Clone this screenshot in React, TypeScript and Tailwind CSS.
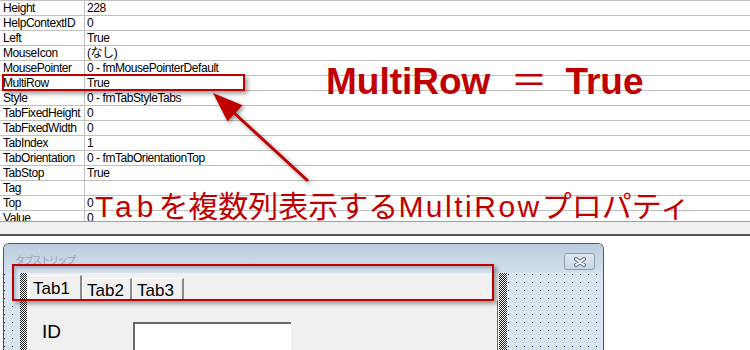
import React from "react";

const rows: [string, string][] = [
  ["Height", "228"],
  ["HelpContextID", "0"],
  ["Left", "True"],
  ["MouseIcon", "(なし)"],
  ["MousePointer", "0 - fmMousePointerDefault"],
  ["MultiRow", "True"],
  ["Style", "0 - fmTabStyleTabs"],
  ["TabFixedHeight", "0"],
  ["TabFixedWidth", "0"],
  ["TabIndex", "1"],
  ["TabOrientation", "0 - fmTabOrientationTop"],
  ["TabStop", "True"],
  ["Tag", ""],
  ["Top", "0"],
  ["Value", "0"],
];

const dots =
  "bg-[#d8e6f3] bg-[conic-gradient(at_1px_1px,transparent_75%,#000_0)] bg-[length:8px_8px] bg-[position:0_1px]";
const stipple =
  "bg-[repeating-conic-gradient(#222_0_25%,#fff_0_50%)] bg-[length:2px_2px]";

export default function App() {
  return (
    <div className="relative w-[750px] h-[350px] overflow-hidden bg-white font-['Liberation_Sans','Noto_Sans_CJK_JP',sans-serif] text-black">
      {/* property grid */}
      <div className="h-[221px] overflow-hidden">
        {rows.map(([k, v]) => (
          <div key={k} className="flex h-[15px] border-t border-[#c0c0c0] text-[12px] tracking-[-0.45px] leading-[14px]">
            <div className="w-[85px] shrink-0 border-r border-[#c0c0c0] pl-[3px] whitespace-nowrap">{k}</div>
            <div className="pl-[2px] whitespace-nowrap">{v}</div>
          </div>
        ))}
      </div>
      <div className="h-[1px] bg-[#a0a0a0]" />
      <div className="h-[12px] bg-[#f0f0f0]" />
      <div className="h-[2px] bg-[#555]" />
      <div className="h-[7px]" />

      {/* dialog */}
      <div className="ml-[3px] w-[601px] h-[107px] rounded-t-[6px] border border-b-0 border-[#555] overflow-hidden flex flex-col">
        <div className="h-[29px] shrink-0 flex items-start justify-between bg-gradient-to-b from-[#bccddf] to-[#d3e0ec]">
          <div className="pl-[11px] pt-[11px] text-[10px] leading-[12px] tracking-[-1.5px] text-[#9aa3ad]">タブストリップ</div>
          <div className="mt-[9px] mr-[8px] w-[31px] h-[17px] rounded-[3px] border border-[#8a9bb0] bg-gradient-to-b from-[#dfe8f1] to-[#c8d5e3] flex items-center justify-center">
            <svg width="14" height="10" viewBox="0 0 14 10">
              <path d="M3 2 L11 8 M11 2 L3 8" stroke="#5f6f80" strokeWidth="4" strokeLinecap="round" />
              <path d="M3 2 L11 8 M11 2 L3 8" stroke="#ffffff" strokeWidth="2" strokeLinecap="round" />
            </svg>
          </div>
        </div>
        <div className={`flex-1 flex ${dots}`}>
          <div className="w-[16px] shrink-0" />
          <div className="w-[487px] shrink-0 flex">
            <div className={`w-[7px] ${stipple}`} />
            <div className="w-[472px] flex flex-col bg-[#f0f0f0]">
              <div className="h-[27px] flex items-end pl-[1px] text-[17px] leading-none">
                <div className="w-[54px] h-[25px] border-l border-t border-white border-r-2 border-r-[#8a8a8a] pl-[4px] pt-[4px]">Tab1</div>
                <div className="w-[50px] h-[22px] border-l border-t border-white border-r-2 border-r-[#8a8a8a] pl-[4px] pt-[3px]">Tab2</div>
                <div className="w-[52px] h-[22px] border-l border-t border-white border-r-2 border-r-[#8a8a8a] pl-[4px] pt-[3px]">Tab3</div>
              </div>
              <div className="flex-1 flex items-start border-t border-white border-r border-r-[#696969] mr-[1px]">
                <div className="ml-[15px] mt-[21px] text-[19px] leading-none">ID</div>
                <div className="ml-[72px] mt-[21px] w-[158px] h-[40px] bg-white border-t-2 border-l-2 border-t-[#696969] border-l-[#696969]" />
              </div>
            </div>
            <div className={`w-[8px] ${stipple}`} />
          </div>
          <div className="flex-1" />
        </div>
      </div>

      {/* annotations */}
      <div className="absolute left-[2px] top-[74px] w-[243px] h-[17px] border-2 border-[#c00000] shadow-[3px_3px_4px_rgba(0,0,0,0.35)]" />
      <div className="absolute left-[12px] top-[264px] w-[482px] h-[37px] border-2 border-[#c00000] shadow-[3px_3px_4px_rgba(0,0,0,0.35),inset_2px_2px_3px_rgba(0,0,0,0.2)]" />

      <div className="absolute left-[326px] top-[63px] flex items-baseline text-[37px] font-bold leading-none text-[#c00000] whitespace-nowrap">
        <span>MultiRow</span>
        <span className="ml-[20px] font-normal">＝</span>
        <span className="ml-[18px]">True</span>
      </div>

      <div className="absolute left-[95px] top-[192px] text-[30px] leading-none text-[#c00000] whitespace-nowrap">
        <span className="tracking-[5px]">Tab</span>を複数列表示する<span className="tracking-[2.5px]">MultiRow</span>プロパティ
      </div>

      <svg className="absolute left-0 top-0 pointer-events-none drop-shadow-[2px_2px_2px_rgba(0,0,0,0.4)]" width="750" height="350">
        <line x1="308" y1="181" x2="232" y2="111" stroke="#c00000" strokeWidth="3" />
        <polygon points="213,93 242.5,105.3 227.5,121.5" fill="#c00000" />
      </svg>
    </div>
  );
}
